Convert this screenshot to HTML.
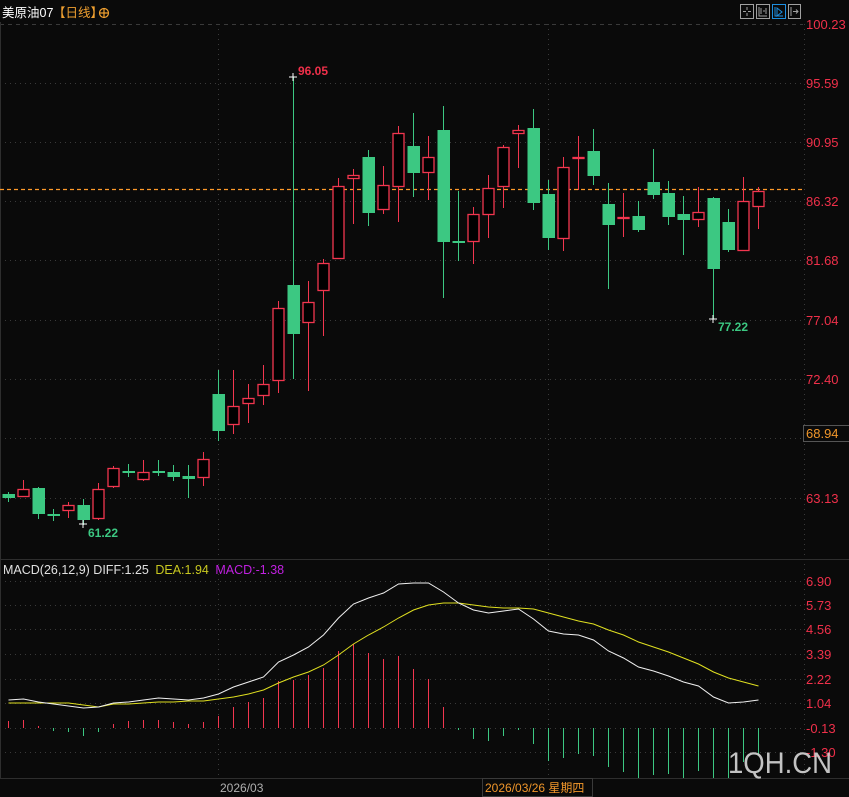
<!DOCTYPE html>
<html><head><meta charset="utf-8"><style>
html,body{margin:0;padding:0;background:#0a0a0a;width:849px;height:797px;overflow:hidden}
svg{display:block}
text{font-family:"Liberation Sans","Noto Sans CJK SC",sans-serif}
</style></head><body>
<svg id="s" width="849" height="797" viewBox="0 0 849 797" xmlns="http://www.w3.org/2000/svg">
<rect width="849" height="797" fill="#0a0a0a"/>
<g stroke="#3a3a3a" stroke-width="1" stroke-dasharray="1,4" fill="none">
<line x1="0" y1="24.5" x2="803" y2="24.5" stroke-dasharray="4,4"/>
<line x1="0" y1="83.5" x2="803" y2="83.5"/>
<line x1="0" y1="142.5" x2="803" y2="142.5"/>
<line x1="0" y1="201.5" x2="803" y2="201.5"/>
<line x1="0" y1="260.5" x2="803" y2="260.5"/>
<line x1="0" y1="320.5" x2="803" y2="320.5"/>
<line x1="0" y1="379.5" x2="803" y2="379.5"/>
<line x1="0" y1="438.5" x2="803" y2="438.5"/>
<line x1="0" y1="498.5" x2="803" y2="498.5"/>
<line x1="0" y1="581.5" x2="803" y2="581.5"/>
<line x1="0" y1="605.5" x2="803" y2="605.5"/>
<line x1="0" y1="629.5" x2="803" y2="629.5"/>
<line x1="0" y1="654.5" x2="803" y2="654.5"/>
<line x1="0" y1="679.5" x2="803" y2="679.5"/>
<line x1="0" y1="703.5" x2="803" y2="703.5"/>
<line x1="0" y1="728.5" x2="803" y2="728.5"/>
<line x1="0" y1="752.5" x2="803" y2="752.5"/>
<line x1="218.5" y1="24" x2="218.5" y2="778"/>
<line x1="548.5" y1="24" x2="548.5" y2="778"/>
<line x1="804.5" y1="24" x2="804.5" y2="778"/>
</g>
<line x1="0" y1="559.5" x2="849" y2="559.5" stroke="#2e2e2e"/>
<line x1="0" y1="778.5" x2="849" y2="778.5" stroke="#2e2e2e"/>
<line x1="0.5" y1="22" x2="0.5" y2="778" stroke="#2e2e2e"/>
<line x1="0" y1="189.5" x2="803" y2="189.5" stroke="#ff9a2a" stroke-width="1.2" stroke-dasharray="4,3"/>
<g id="c"></g>
<g id="m"></g>
<!-- header -->
<text x="2" y="17" fill="#ffffff" font-size="12.5">美原油07</text>
<text x="53" y="17" fill="#f0a030" font-size="12.5">【日线】</text>
<circle cx="104" cy="13" r="4.5" fill="none" stroke="#f0a030" stroke-width="1.2"/>
<line x1="99.5" y1="13" x2="108.5" y2="13" stroke="#f0a030" stroke-width="1.2"/>
<line x1="104" y1="8.5" x2="104" y2="17.5" stroke="#f0a030" stroke-width="1.2"/>
<!-- icons -->
<g fill="none" stroke-width="1">
<rect x="740.5" y="4.5" width="13" height="14" stroke="#a0a0a0"/>
<path d="M747 7v3M747 13v3M743 11.5h3M748 11.5h3" stroke="#a0a0a0"/>
<rect x="756.5" y="4.5" width="13" height="14" stroke="#a0a0a0"/>
<path d="M759 7v9h8M761 8v6M766 8v6M763 11h2" stroke="#a0a0a0"/>
<rect x="772.5" y="4.5" width="13" height="14" stroke="#1e8fe0"/>
<path d="M775 7v9h8M777 8l5 4-5 4z" stroke="#1e8fe0"/>
<rect x="788.5" y="4.5" width="12" height="14" stroke="#a0a0a0"/>
<path d="M791 7v9M793 11.5h5M796 9.5l2 2-2 2" stroke="#a0a0a0"/>
</g>
<!-- price axis -->
<g fill="#f0304a" font-size="13">
<text x="806" y="29">100.23</text>
<text x="806" y="88">95.59</text>
<text x="806" y="147">90.95</text>
<text x="806" y="206">86.32</text>
<text x="806" y="265">81.68</text>
<text x="806" y="325">77.04</text>
<text x="806" y="384">72.40</text>
<text x="806" y="503">63.13</text>
</g>
<rect x="803.5" y="425.5" width="46" height="16" fill="#0a0a0a" stroke="#555"/>
<text x="806" y="438" fill="#f0962a" font-size="13">68.94</text>
<text x="298" y="75" fill="#f0304a" font-size="12" font-weight="bold">96.05</text>
<path d="M289 77h8M293 73v8" stroke="#fff"/>
<text x="88" y="537" fill="#3cc882" font-size="12" font-weight="bold">61.22</text>
<path d="M79 524h8M83 520v8" stroke="#fff"/>
<text x="718" y="331" fill="#3cc882" font-size="12" font-weight="bold">77.22</text>
<path d="M709 319h8M713 315v8" stroke="#fff"/>
<!-- macd axis -->
<g fill="#f0304a" font-size="13">
<text x="806" y="586">6.90</text>
<text x="806" y="610">5.73</text>
<text x="806" y="634">4.56</text>
<text x="806" y="659">3.39</text>
<text x="806" y="684">2.22</text>
<text x="806" y="708">1.04</text>
<text x="806" y="733">-0.13</text>
<text x="806" y="757">-1.30</text>
</g>
<text x="3" y="574" font-size="12.5"><tspan fill="#e0e0e0">MACD(26,12,9) DIFF:1.25 </tspan><tspan fill="#c8c820" dx="3">DEA:1.94 </tspan><tspan fill="#c020e0" dx="3">MACD:-1.38</tspan></text>
<text x="728" y="773" fill="#d8d8d8" font-size="30" textLength="104" lengthAdjust="spacingAndGlyphs" opacity="0.9">1QH.CN</text>
<!-- time axis -->
<text x="220" y="792" fill="#b0b0b0" font-size="12">2026/03</text>
<rect x="482.5" y="778.5" width="110" height="18" fill="#0a0a0a" stroke="#3a3a3a"/>
<text x="485" y="792" fill="#f0962a" font-size="12">2026/03/26 星期四</text>
</svg>
<script>
var R="#f2364f",G="#3cc882";
var C=[[494,498,492,502,0],[489,497,480,497,1],[488,514,487,519,0],[514,514,509,521,0],[505,511,502,518,1],[505,520,499,525,0],[489,519,483,520,1],[468,487,466,488,1],[471,471,464,477,0],[472,480,460,481,1],[471,471,460,476,0],[472,477,465,481,0],[476,479,465,498,0],[459,478,452,486,1],[394,431,370,441,0],[406,425,370,434,1],[398,404,384,423,1],[384,396,365,405,1],[308,381,301,393,1],[285,334,77,379,0],[302,323,281,391,1],[263,291,259,336,1],[186,259,178,259,1],[175,179,169,224,1],[157,213,150,226,0],[185,210,166,214,1],[133,187,126,222,1],[146,173,113,197,0],[157,173,136,200,1],[130,242,106,298,0],[241,242,191,261,0],[214,242,207,264,1],[188,215,175,238,1],[147,187,145,208,1],[130,134,125,168,1],[128,203,109,210,0],[194,238,180,250,0],[167,239,157,251,1],[157,159,136,190,1],[151,176,129,185,0],[204,225,183,289,0],[217,219,193,237,1],[216,230,201,232,0],[182,195,149,199,0],[193,217,181,225,0],[214,220,196,255,0],[212,220,187,227,1],[198,269,197,319,0],[222,250,209,252,0],[201,251,177,251,1],[191,207,187,229,1]];
var H=[721,720,726,731,732,736,732,724,721,720,720,722,724,722,716,707,702,698,681,680,675,668,651,644,653,659,656,669,679,707,730,739,741,736,730,744,761,758,754,756,767,772,778,775,774,778,771,778,778,762,755];
var D=[700,699,702,704,706,708,707,703,702,700,698,699,700,698,694,687,682,677,662,655,647,635,618,604,598,593,584,583,583,592,603,610,613,611,609,619,631,634,635,640,651,658,667,671,676,682,686,697,703,702,700];
var E=[703,703,703,703,703,705,707,704,704,703,702,702,701,701,699,697,694,690,683,677,672,665,655,644,635,627,618,610,605,603,603,605,607,608,608,609,613,617,621,624,630,635,642,647,652,658,664,672,678,682,686];
var s="",m="",dp="",ep="";
for(var i=0;i<C.length;i++){var x=8.5+15*i,c=C[i],col=c[4]?R:G;
s+='<line x1="'+x+'" y1="'+c[2]+'" x2="'+x+'" y2="'+c[3]+'" stroke="'+col+'"/>';
var h=Math.max(c[1]-c[0],1);
if(c[4]) s+='<rect x="'+(x-5.5)+'" y="'+(c[0]+0.5)+'" width="11" height="'+Math.max(h-1,1)+'" fill="#000" stroke="'+col+'" stroke-width="1.3"/>';
else s+='<rect x="'+(x-6)+'" y="'+c[0]+'" width="12.5" height="'+(h<2?2:h)+'" fill="'+col+'"/>';
var hy=H[i]; m+='<line x1="'+x+'" y1="728" x2="'+x+'" y2="'+hy+'" stroke="'+(hy<728?R:G)+'"/>';
dp+=(i?'L':'M')+x+' '+D[i]; ep+=(i?'L':'M')+x+' '+E[i];}
m+='<path d="'+ep+'" fill="none" stroke="#e0e020" stroke-width="1"/><path d="'+dp+'" fill="none" stroke="#f0f0f0" stroke-width="1"/>';
document.getElementById("c").innerHTML=s;document.getElementById("m").innerHTML=m;
</script>
</body></html>
